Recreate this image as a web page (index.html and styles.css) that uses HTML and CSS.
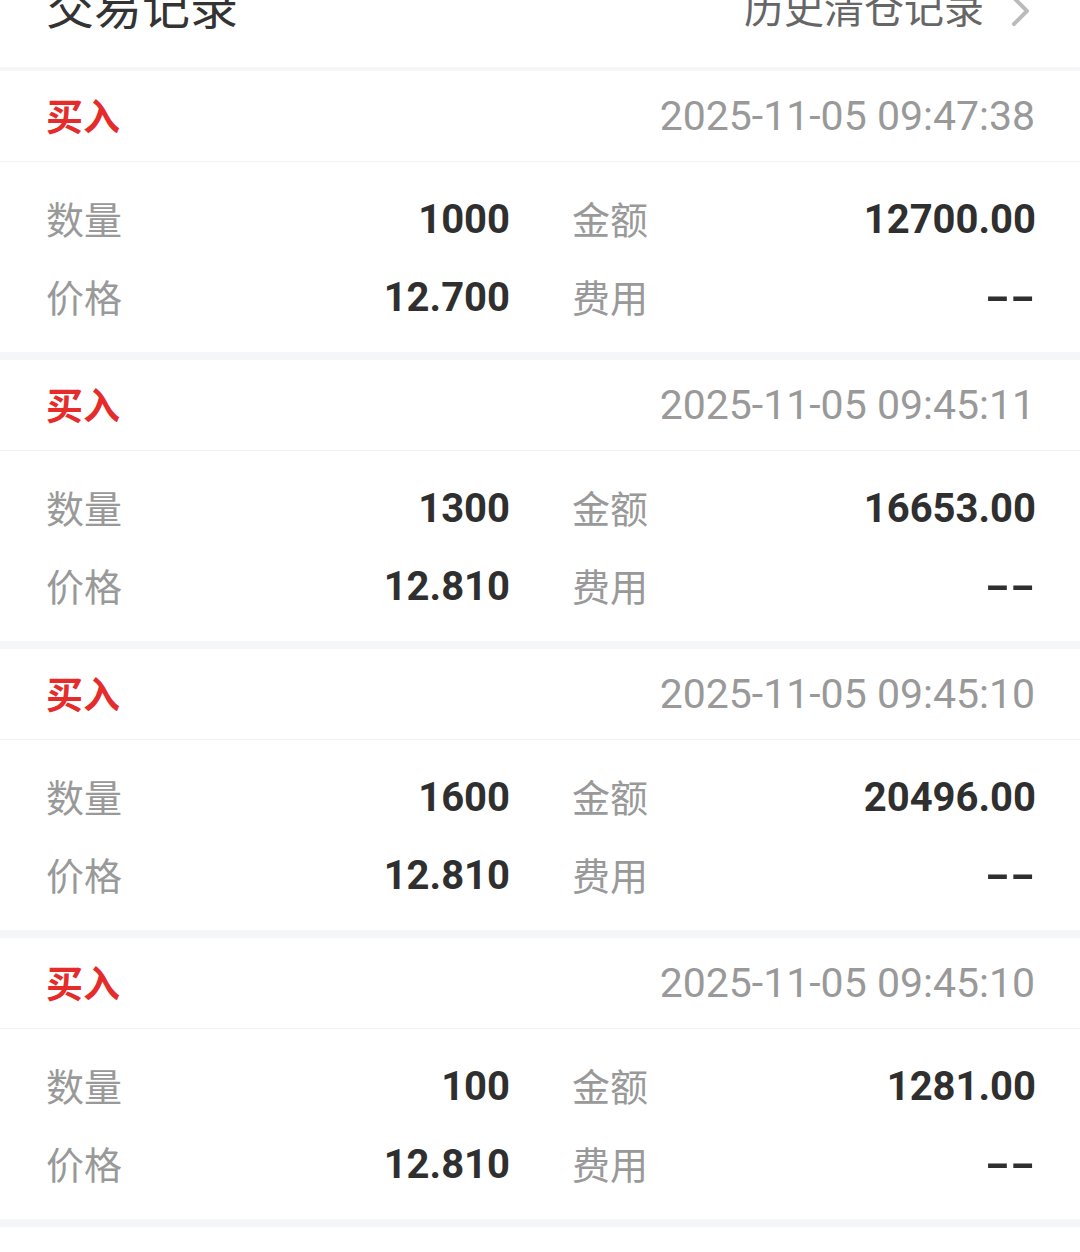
FILE: index.html
```html
<!DOCTYPE html>
<html lang="zh-CN">
<head>
    <meta charset="UTF-8">
    <meta name="viewport" content="width=device-width, initial-scale=1.0">
    <title>交易记录</title>
    <link rel="stylesheet" href="styles.css">
</head>
<body>
    <div class="page-head">
        <span class="page-title">交易记录</span>
        <a href="#" class="history-link">
            历史清仓记录
            <svg class="chevron" width="22" height="34" viewBox="0 0 22 34">
                <path d="M4 4 L17 17 L4 30" fill="none" stroke="#bbbbbb" stroke-width="4" stroke-linecap="round" stroke-linejoin="round"/>
            </svg>
        </a>
    </div>

    <div class="trade-list">
        <div class="trade">
            <div class="trade-head">
                <span class="side buy">买入</span>
                <span class="time">2025-11-05 09:47:38</span>
            </div>
            <div class="trade-body">
                <div class="cell"><span class="label">数量</span><span class="value">1000</span></div>
                <div class="cell"><span class="label">金额</span><span class="value">12700.00</span></div>
                <div class="cell"><span class="label">价格</span><span class="value">12.700</span></div>
                <div class="cell"><span class="label">费用</span><span class="value empty">--</span></div>
            </div>
        </div>

        <div class="trade">
            <div class="trade-head">
                <span class="side buy">买入</span>
                <span class="time">2025-11-05 09:45:11</span>
            </div>
            <div class="trade-body">
                <div class="cell"><span class="label">数量</span><span class="value">1300</span></div>
                <div class="cell"><span class="label">金额</span><span class="value">16653.00</span></div>
                <div class="cell"><span class="label">价格</span><span class="value">12.810</span></div>
                <div class="cell"><span class="label">费用</span><span class="value empty">--</span></div>
            </div>
        </div>

        <div class="trade">
            <div class="trade-head">
                <span class="side buy">买入</span>
                <span class="time">2025-11-05 09:45:10</span>
            </div>
            <div class="trade-body">
                <div class="cell"><span class="label">数量</span><span class="value">1600</span></div>
                <div class="cell"><span class="label">金额</span><span class="value">20496.00</span></div>
                <div class="cell"><span class="label">价格</span><span class="value">12.810</span></div>
                <div class="cell"><span class="label">费用</span><span class="value empty">--</span></div>
            </div>
        </div>

        <div class="trade">
            <div class="trade-head">
                <span class="side buy">买入</span>
                <span class="time">2025-11-05 09:45:10</span>
            </div>
            <div class="trade-body">
                <div class="cell"><span class="label">数量</span><span class="value">100</span></div>
                <div class="cell"><span class="label">金额</span><span class="value">1281.00</span></div>
                <div class="cell"><span class="label">价格</span><span class="value">12.810</span></div>
                <div class="cell"><span class="label">费用</span><span class="value empty">--</span></div>
            </div>
        </div>
    </div>
</body>
</html>
```

FILE: styles.css
```css
body {
    margin: 0;
    background-color: #ffffff;
    font-family: Roboto, "Noto Sans CJK SC", sans-serif;
    overflow: hidden;
}

/* top bar, page is scrolled a little so it is cut off */
.page-head {
    height: 67px;
    display: flex;
    justify-content: space-between;
    align-items: flex-start;
    padding: 0 46px;
    background-color: #fff;
    border-bottom: 4px solid #f5f6f8;
    overflow: hidden;
}

.page-title {
    margin-top: -20px;
    font-size: 48px;
    line-height: 56px;
    color: #333;
}

.history-link {
    margin-top: -18px;
    display: flex;
    align-items: center;
    gap: 26px;
    font-size: 40px;
    line-height: 56px;
    color: #666;
    text-decoration: none;
}

.history-link .chevron {
    margin-top: 2px;
    margin-right: 2px;
}

.trade {
    background-color: #fff;
    border-bottom: 8px solid #f5f6f8;
}

.trade-head {
    height: 90px;
    display: flex;
    justify-content: space-between;
    align-items: center;
    padding: 0 45px 0 46px;
    border-bottom: 1px solid #f2f2f2;
}

.side {
    margin-top: -2px;
    font-size: 37px;
    font-weight: bold;
}

.buy {
    color: #e52c2a;
}

.time {
    font-size: 41px;
    color: #999;
}

.trade-body {
    display: grid;
    grid-template-columns: 1fr 1fr;
    column-gap: 62px;
    padding: 18px 44px 16px 46px;
}

.cell {
    height: 78px;
    display: flex;
    justify-content: space-between;
    align-items: center;
}

.label {
    margin-top: -3px;
    font-size: 38px;
    color: #999;
}

.value {
    font-size: 40px;
    font-weight: bold;
    color: #2f2f2f;
}

.value.empty {
    display: inline-block;
    letter-spacing: -1px;
    margin-right: 1px;
    transform: scaleX(1.7);
    transform-origin: right center;
}
```
